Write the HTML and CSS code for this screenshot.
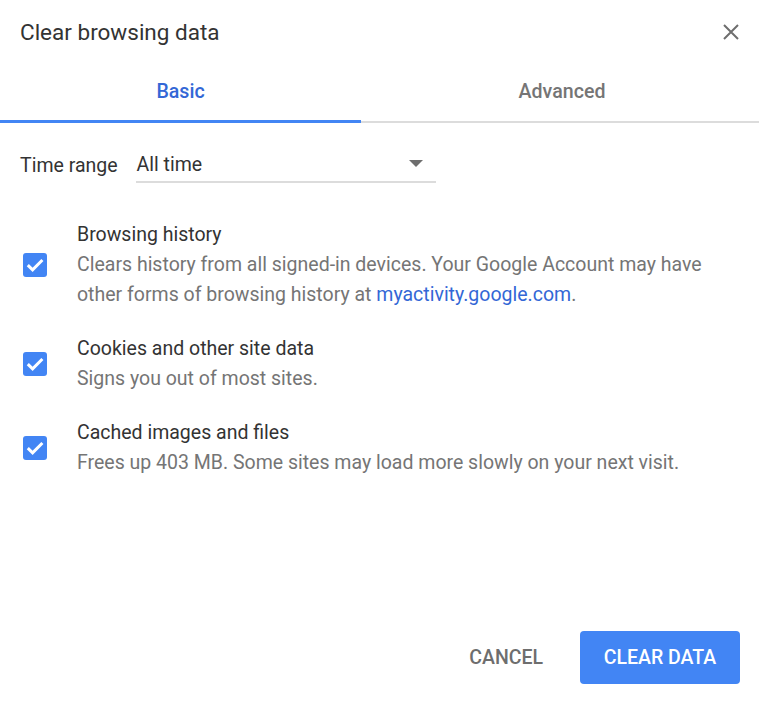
FILE: index.html
```html
<!DOCTYPE html>
<html>
<head>
<meta charset="utf-8">
<link rel="stylesheet" href="styles.css">
</head>
<body>
<div class="dialog">
  <header class="head">
    <h1 class="title">Clear browsing data</h1>
    <button class="close" aria-label="Close">
      <svg width="16" height="16" viewBox="0 0 16 16"><path d="M1 1L15 15M15 1L1 15" stroke="#6e6e6e" stroke-width="2" fill="none"/></svg>
    </button>
  </header>
  <nav class="tabs">
    <div class="tab active">Basic</div>
    <div class="tab">Advanced</div>
  </nav>
  <div class="range">
    <span class="range-label">Time range</span>
    <div class="select">
      <span>All time</span>
      <svg class="arrow" width="14" height="8" viewBox="0 0 14 8"><path d="M0 0H14L7 7Z" fill="#6e6e6e"/></svg>
    </div>
  </div>
  <div class="items">
    <div class="item">
      <span class="check"><svg width="24" height="24" viewBox="0 0 24 24"><path d="M4.8 12.2L9.6 16.8L19.4 7" stroke="#fff" stroke-width="3" fill="none"/></svg></span>
      <div class="text">
        <div class="label">Browsing history</div>
        <div class="desc">Clears history from all signed-in devices. Your Google Account may have other forms of browsing history at <a href="#">myactivity.google.com</a>.</div>
      </div>
    </div>
    <div class="item">
      <span class="check"><svg width="24" height="24" viewBox="0 0 24 24"><path d="M4.8 12.2L9.6 16.8L19.4 7" stroke="#fff" stroke-width="3" fill="none"/></svg></span>
      <div class="text">
        <div class="label">Cookies and other site data</div>
        <div class="desc">Signs you out of most sites.</div>
      </div>
    </div>
    <div class="item">
      <span class="check"><svg width="24" height="24" viewBox="0 0 24 24"><path d="M4.8 12.2L9.6 16.8L19.4 7" stroke="#fff" stroke-width="3" fill="none"/></svg></span>
      <div class="text">
        <div class="label">Cached images and files</div>
        <div class="desc">Frees up 403 MB. Some sites may load more slowly on your next visit.</div>
      </div>
    </div>
  </div>
  <footer class="actions">
    <button class="btn cancel">CANCEL</button>
    <button class="btn primary">CLEAR DATA</button>
  </footer>
</div>
</body>
</html>
```

FILE: styles.css
```css
html, body {
  margin: 0;
  padding: 0;
  background: #fff;
}
body {
  font-family: Roboto, "Liberation Sans", sans-serif;
  color: #333;
}
.dialog {
  width: 759px;
  height: 705px;
  display: flex;
  flex-direction: column;
}
.head {
  display: flex;
  align-items: center;
  justify-content: space-between;
  height: 64px;
  padding: 0 20px 0 20px;
}
.title {
  margin: 0;
  font-size: 22.5px;
  font-weight: 400;
  color: #333;
}
.close {
  border: 0;
  background: none;
  padding: 0;
  width: 16px;
  height: 16px;
  display: flex;
}
.tabs {
  display: grid;
  grid-template-columns: 361px 1fr;
  border-bottom: 2px solid #dcdcdc;
  height: 57px;
}
.tab {
  display: flex;
  align-items: center;
  justify-content: center;
  font-size: 19.6px;
  font-weight: 500;
  color: #757575;
  padding-left: 4px;
  padding-bottom: 2px;
}
.tab.active {
  color: #3367d6;
  border-bottom: 3px solid #4285f4;
  margin-bottom: -2px;
  padding-left: 0;
  padding-bottom: 2px;
}
.range {
  display: flex;
  align-items: center;
  padding: 22px 20px 0 20px;
  height: 38px;
  font-size: 19.5px;
}
.range-label {
  margin-right: 18px;
  padding-top: 2px;
}
.select {
  width: 300px;
  height: 38px;
  box-sizing: border-box;
  border-bottom: 2px solid #dcdcdc;
  display: flex;
  align-items: center;
  justify-content: space-between;
  padding: 2px 13px 0 1px;
}
.items {
  display: flex;
  flex-direction: column;
  gap: 24px;
  padding: 37px 20px 0 23px;
}
.item {
  display: flex;
  align-items: center;
}
.check {
  width: 24px;
  height: 24px;
  background: #4285f4;
  border-radius: 3px;
  flex: none;
  margin-right: 30px;
  display: flex;
}
.text {
  font-size: 19.5px;
  line-height: 30px;
}
.label {
  color: #333;
}
.desc {
  color: #757575;
}
.desc a {
  color: #3367d6;
  text-decoration: none;
}
.actions {
  margin-top: auto;
  display: flex;
  justify-content: flex-end;
  align-items: center;
  gap: 13px;
  padding: 0 19px 21px 0;
}
.btn {
  font-family: Roboto, "Liberation Sans", sans-serif;
  font-size: 19.5px;
  font-weight: 500;
  border: 0;
  border-radius: 4px;
  height: 53px;
  padding: 0 24px;
  white-space: nowrap;
  cursor: pointer;
}
.cancel {
  background: none;
  color: #6e6e6e;
}
.primary {
  background: #4285f4;
  color: #fff;
  width: 160px;
  padding: 0;
}
```
